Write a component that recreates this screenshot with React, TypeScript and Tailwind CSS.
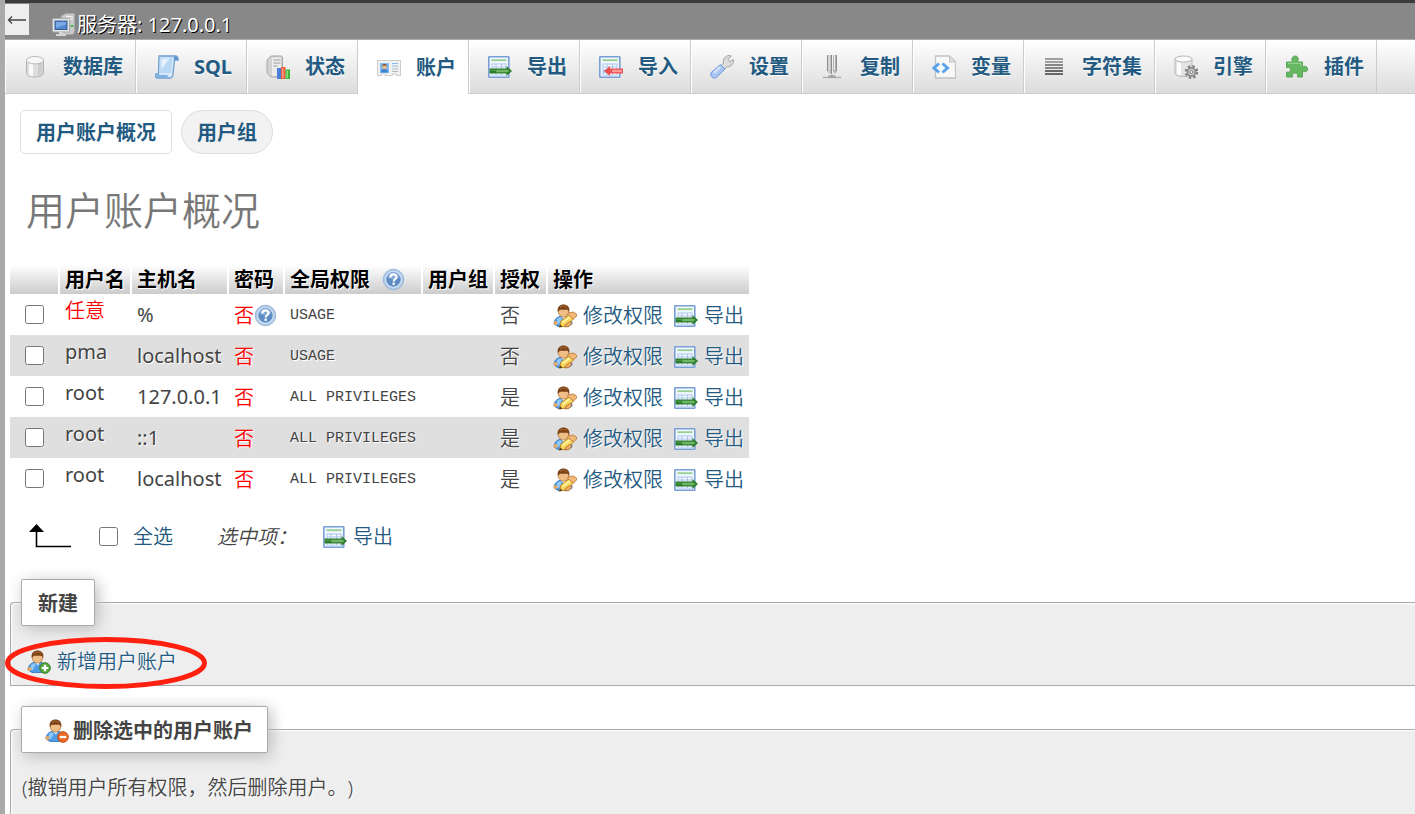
import React from 'react';

type IconProps = { className?: string };

const Svg = ({ className = 'h-6 w-6', children }: { className?: string; children: React.ReactNode }) => (
  <svg viewBox="0 0 24 24" className={`shrink-0 ${className}`} fill="none" aria-hidden="true">
    {children}
  </svg>
);

const ServerIcon = ({ className }: IconProps) => (
  <Svg className={className}>
    <path d="M9 3l5-2.500h8.500V19l-2 2.500H10z" fill="#c9c9c9" stroke="#a5a5a5" />
    <path d="M14 3.500h7M14 6h7" stroke="#f2f2f2" />
    <path d="M18.500 13h3" stroke="#39b54a" strokeWidth="1.800" />
    <rect x="0.500" y="5.500" width="17" height="13.500" rx="1" fill="#e6e6e6" stroke="#a3a9ae" />
    <rect x="3" y="8" width="12" height="8.500" fill="#4f86cf" stroke="#3c5f92" />
    <path d="M4 9h10v2.500L4 15z" fill="#79a9e4" />
    <path d="M7 19h4v2h3v2H4v-2h3z" fill="#d5d5d5" />
  </Svg>
);

const DatabaseIcon = () => (
  <Svg>
    <path d="M2.500 5v13c0 2.500 4 4 8.500 4s8.500-1.500 8.500-4V5z" fill="#dedede" stroke="#b3b3b3" />
    <path d="M5 7v13c1 .8 2 1.200 4 1.500V8z" fill="#fafafa" />
    <path d="M14 8v13.500c2-.3 3.500-.8 4.500-1.500V7z" fill="#cdcdcd" />
    <ellipse cx="11" cy="5.200" rx="8.500" ry="3.700" fill="#f8f8f8" stroke="#bababa" />
  </Svg>
);

const SqlIcon = () => (
  <Svg>
    <path d="M4 1h16c2.500 0 3.500 1.500 3 4h-3.500L18 19c-.2 2.500-1 4-3 4H2.500c-2 0-2.500-2-1.500-4h2.500z" fill="#d6e8fa" stroke="#6f9fd0" strokeWidth="1.300" />
    <path d="M5.500 2.500h12L16 18H5z" fill="#b9d8f6" />
    <path d="M6.500 3.500h8l-8 11z" fill="#e4f1fd" />
    <path d="M1.500 20h11c.2 2 .6 2.500 2 2.500H3c-1.500 0-2-1.500-1.500-2.500z" fill="#7fb0e3" />
    <path d="M18.500 1.700c2-.7 4.500 0 4.500 3.300h-3.500z" fill="#5f95cf" />
  </Svg>
);

const StatusIcon = () => (
  <Svg>
    <path d="M1 5l4-4h10.500l1 2v17l-3 2H5l-4-4z" fill="#d2d2d2" stroke="#a6a6a6" />
    <path d="M6 2.500h9V21H6z" fill="#ececec" />
    <path d="M7.500 5h7M7.500 8h7M7.500 11h4" stroke="#9b9b9b" />
    <path d="M11 13h4v11h-4z" fill="#4a80dc" />
    <path d="M15 12h4.500v12H15z" fill="#ee5b3a" />
    <path d="M19.500 14.500H24V24h-4.500z" fill="#3eb63f" />
    <path d="M16 13h1.500v10H16z" fill="#ff9b80" />
    <path d="M20.500 15.500H22V23h-1.500z" fill="#86dc81" />
  </Svg>
);

const AccountsIcon = () => (
  <Svg>
    <path d="M.5 4.500h23v15h-4v-1.500h-4v1.500h-7v-1.500h-4v1.500h-4z" fill="#f1f1f1" stroke="#cccccc" />
    <path d="M3 7h9v10H3z" fill="#7fbcf3" />
    <path d="M4 16.500c0-3 1.500-4 3.500-4s3.500 1 3.500 4z" fill="#3f83cf" />
    <circle cx="7.500" cy="11" r="2.300" fill="#e9b887" />
    <path d="M4.700 10.500c0-3.500 5.600-3.500 5.600 0L9 9.500H6z" fill="#7d451b" />
    <path d="M15 7.500h6M15 10h6" stroke="#8dbdea" strokeWidth="1.200" />
    <path d="M15 13h6M15 15.500h6" stroke="#b9b9b9" strokeWidth="1.200" />
  </Svg>
);

const Sheet = () => (
  <>
    <rect x="0.800" y="1.800" width="20" height="20.400" rx="0.500" fill="#f1f7ff" stroke="#7a9fd6" strokeWidth="1.600" />
    <path d="M3.500 5.200h15" stroke="#97cf90" strokeWidth="1.800" />
    <path d="M3.500 8.500h15v12h-15z" fill="#aac5ec" />
    <path d="M4.500 9.500h3v2h-3zM8.500 9.500h4.500v2H8.500zM14 9.500h3.500v2H14zM4.500 12.500h3v2h-3zM8.500 12.500h4.500v2H8.500zM14 12.500h3.500v2H14zM4.500 18h3v1.800h-3zM8.500 18h4.500v1.800H8.500zM14 18h3.500v1.800H14z" fill="#f6faff" />
  </>
);

const ExportIcon = ({ className }: IconProps) => (
  <Svg className={className}>
    <Sheet />
    <path d="M1.500 13.500h17v-2.500l5.500 5-5.500 5v-2.500h-17z" fill="#2c7d2b" />
    <path d="M8 14.800h11.500l2 1.200-2 1.200H8z" fill="#6fb766" />
    <path d="M2.500 14.800H9v1.200H2.500z" fill="#4a9b44" />
  </Svg>
);

const ImportIcon = () => (
  <Svg>
    <Sheet />
    <path d="M24 13.500H11v-2.500l-6 5 6 5v-2.500h13z" fill="#ee4f4f" />
    <path d="M23 14.800H13v2.400h10z" fill="#ff9c9c" />
  </Svg>
);

const WrenchIcon = () => (
  <Svg>
    <path d="M11 11l2.500-3c-.8-4 1.700-7.200 5.700-7.500l2 .5-3 3.500 1.500 2.300 3.500-2.300c1 4-2 7.500-6 7.200l-3.500 3z" fill="#dcdcdc" stroke="#a1a1a1" />
    <path d="M10.500 9.500l4.500 4.500-8.500 8.500c-3 2-7-1.500-5.500-4.800z" fill="#a9c4f1" stroke="#7198d8" />
    <path d="M10 12l-6 6" stroke="#d3e1fa" strokeWidth="2.500" />
  </Svg>
);

const ReplicationIcon = () => (
  <Svg>
    <path d="M6 0h4v18L8.500 19 6 16z" fill="#c4c4c4" />
    <path d="M12 0h4v16l-2 3-2-3z" fill="#b3b3b3" />
    <path d="M8 0v15M13.500 0v15" stroke="#e9e9e9" />
    <path d="M6.500 0v16M10.500 0v19M15.500 0v16" stroke="#8b8b8b" />
    <path d="M2 22.500h18" stroke="#b0b0b0" strokeWidth="1.500" />
    <path d="M7 21l4-1.500 4 1.500v2H7z" fill="#a5a5a5" />
  </Svg>
);

const VariablesIcon = () => (
  <Svg>
    <path d="M3.500 1h14l6 6v16h-20z" fill="#f8f8f8" stroke="#c2c2c2" strokeWidth="1.300" />
    <path d="M17.500 1v6h6z" fill="#e2e2e2" stroke="#c2c2c2" />
    <path d="M7 8.500L2 13l5 4.500M10.500 8.500l5 4.500-5 4.500" stroke="#5ba2e8" strokeWidth="3" />
  </Svg>
);

const CharsetIcon = () => (
  <Svg>
    <path d="M2 4h18M2 7h18" stroke="#858585" strokeWidth="1.400" />
    <path d="M2 10h18M2 13h18" stroke="#666" strokeWidth="1.400" />
    <path d="M2 16h18M2 19h18" stroke="#3d3d3d" strokeWidth="1.600" />
  </Svg>
);

const EngineIcon = () => (
  <Svg>
    <path d="M1 4v14c0 2 3.500 3.500 8.500 3.500S18 20 18 18V4z" fill="#e4e4e4" stroke="#b5b5b5" />
    <path d="M3 7v12c1 .8 2 1.200 4 1.500V8z" fill="#fbfbfb" />
    <ellipse cx="9.500" cy="4" rx="8.500" ry="3" fill="#fafafa" stroke="#bababa" />
    <circle cx="17.500" cy="17" r="5.700" stroke="#858585" strokeWidth="2.500" strokeDasharray="2.500 2" />
    <circle cx="17.500" cy="17" r="4" fill="#cfcfcf" stroke="#858585" strokeWidth="1.600" />
    <circle cx="17.500" cy="17" r="1.500" fill="#f5f5f5" stroke="#777" />
  </Svg>
);

const PluginIcon = () => (
  <Svg>
    <path d="M1.500 7h6c-1.500-3.500 0-6 2.700-6s4 2.500 2.300 6h5v5c3-1.500 5-.5 5 2s-2 3.500-5 2v6h-5c.8-3-.4-4-2.500-4s-3.300 1-2.500 4h-6v-5c3 .8 4-.6 4-2.300s-1-2.700-4-2z" fill="#67b862" stroke="#5aa556" />
    <path d="M3 8.300h13V11" stroke="#9ad894" />
  </Svg>
);

const HelpIcon = () => (
  <svg viewBox="0 0 24 24" className="inline-block h-[23px] w-[23px] shrink-0" fill="none" aria-hidden="true">
    <circle cx="12" cy="12" r="10.700" fill="#b3cbe8" stroke="#94b2d6" />
    <circle cx="12" cy="12" r="8.200" fill="#5d8cc4" stroke="#cfe0f3" strokeWidth="1.300" />
    <path d="M6 10a6 6 0 0 1 12 0c-3 2.500-9 2.500-12 0z" fill="#86abd8" />
    <path d="M8.800 9.800c0-4.200 6.400-4 6.400-.4 0 2.300-3 2.200-3 4.600" stroke="#fff" strokeWidth="2.200" />
    <rect x="11" y="15.200" width="2.400" height="2.400" fill="#fff" />
  </svg>
);

const Person = () => (
  <>
    <path d="M1 20c0-4.500 3-7.500 8-8h3c4.500.5 7 3 7 8l-4 2.500H5z" fill="#4e9be8" stroke="#2c6eb9" strokeWidth="0.800" />
    <path d="M4 15c2-2 4-2 5-1l-3 6H4z" fill="#91c8f8" />
    <path d="M8 12h5l-2 3.500z" fill="#fff" />
    <circle cx="2.500" cy="19" r="2" fill="#e9a75f" />
    <ellipse cx="10.500" cy="7.800" rx="5.200" ry="5.300" fill="#efbd86" stroke="#a96a31" strokeWidth="0.700" />
    <path d="M4.700 8C4 2.500 7 .5 10.500.5S17.200 2.500 16.300 8l-1.800-2.200H7z" fill="#7b4318" />
    <path d="M7 3.500c2-1.800 5-1.800 7 0" stroke="#a8672f" strokeWidth="1.200" />
  </>
);

const UserEditIcon = () => (
  <Svg>
    <Person />
    <path d="M8 17l8.500-6.500 4.500 4-8 7.500-6.500 1z" fill="#f6d65a" stroke="#c58f2a" />
    <path d="M9.500 18.500l8-6" stroke="#fff3a3" strokeWidth="1.800" />
    <path d="M14.500 10.500c1-2 2-2.500 3.500-1.500 1-1.500 3-1.500 3 0 2 0 3 1 2.500 3L20.500 15z" fill="#f3b776" stroke="#b56c28" strokeWidth="0.800" />
    <path d="M13 20l4-2.500 2 1.500-3 3.500-4 .5z" fill="#f0ae68" stroke="#b56c28" strokeWidth="0.800" />
    <path d="M6 23.500l1-3 2.500 2z" fill="#5c3a17" />
  </Svg>
);

const UserAddIcon = () => (
  <Svg>
    <Person />
    <circle cx="18" cy="18" r="5.300" fill="#5aab3e" stroke="#347b25" />
    <path d="M18 14.700v6.600M14.700 18h6.600" stroke="#fff" strokeWidth="2.200" />
  </Svg>
);

const UserRemoveIcon = () => (
  <Svg>
    <Person />
    <circle cx="18" cy="18" r="5.300" fill="#ec6b25" stroke="#c14a12" />
    <path d="M14.700 18h6.600" stroke="#fff" strokeWidth="2.200" />
  </Svg>
);

const tabs = [
  { label: '数据库', icon: <DatabaseIcon /> },
  { label: 'SQL', icon: <SqlIcon /> },
  { label: '状态', icon: <StatusIcon /> },
  { label: '账户', icon: <AccountsIcon />, active: true },
  { label: '导出', icon: <ExportIcon /> },
  { label: '导入', icon: <ImportIcon /> },
  { label: '设置', icon: <WrenchIcon /> },
  { label: '复制', icon: <ReplicationIcon /> },
  { label: '变量', icon: <VariablesIcon /> },
  { label: '字符集', icon: <CharsetIcon /> },
  { label: '引擎', icon: <EngineIcon /> },
  { label: '插件', icon: <PluginIcon /> },
];

const accounts = [
  { user: '任意', host: '%', privileges: 'USAGE', grant: '否', anonymous: true },
  { user: 'pma', host: 'localhost', privileges: 'USAGE', grant: '否' },
  { user: 'root', host: '127.0.0.1', privileges: 'ALL PRIVILEGES', grant: '是' },
  { user: 'root', host: '::1', privileges: 'ALL PRIVILEGES', grant: '是' },
  { user: 'root', host: 'localhost', privileges: 'ALL PRIVILEGES', grant: '是' },
];

const thClass =
  'h-[29px] border-r-2 border-white bg-gradient-to-b from-white to-[#cccccc] p-0 pl-[5px] text-left font-bold text-black last:border-r-0';
const legendClass =
  'ml-[10px] flex h-[47px] items-center rounded-[2px] border border-[#aaaaaa] bg-white pt-[2px] font-bold shadow-[3px_3px_15px_#bbbbbb]';
const fieldsetClass =
  'min-w-0 rounded-tl border border-r-0 border-[#aaaaaa] bg-[#eeeeee] shadow-[inset_1px_1px_2px_#ffffff] [text-shadow:1px_1px_2px_#ffffff]';

export default function App() {
  return (
    <div className="h-screen overflow-hidden border-l-[5px] border-[#aaaaaa] bg-white font-['Noto_Sans','Noto_Sans_CJK_SC',sans-serif] text-[20px] leading-[28px] text-[#444444]">
      <header className="flex h-10 items-start border-t-3 border-b border-t-[#3b3b3b] border-b-[#aaaaaa] bg-[#888888]">
        <button type="button" aria-label="收起" className="mt-px flex h-[31px] w-6 items-center justify-center bg-[#eeeeee]">
          <svg viewBox="0 0 20 12" className="h-3 w-5" fill="none" stroke="#444" strokeWidth="1.300" aria-hidden="true">
            <path d="M19 6H2M5 2.500L1.500 6 5 9.500" />
          </svg>
        </button>
        <a href="#server" className="ml-[23px] flex h-9 items-center gap-px pt-[7px] text-white [text-shadow:1px_1px_0_#000000]">
          <ServerIcon />
          服务器: 127.0.0.1
        </a>
      </header>

      <nav className="flex h-[54px] border-b border-[#cccccc] bg-gradient-to-b from-white to-[#dcdcdc]">
        {tabs.map((t) => (
          <a
            key={t.label}
            href={`#${t.label}`}
            className={`flex min-w-[111px] shrink-0 items-center gap-[15px] whitespace-nowrap border-x border-l-white border-r-[#cccccc] pt-px pr-3 pl-[18px] font-bold text-[#235a81] [text-shadow:0_1px_0_#ffffff] ${
              t.active ? 'mb-[-1px] bg-white' : ''
            }`}
          >
            {t.icon}
            {t.label}
          </a>
        ))}
      </nav>

      <main className="pl-[5px]">
        <div className="flex gap-[9px] pt-4 pl-[10px] font-bold text-[#235a81]">
          <a href="#overview" className="flex h-11 items-center rounded-[5px] border border-[#dddddd] bg-white px-[15px] pt-px">用户账户概况</a>
          <a href="#groups" className="flex h-11 items-center rounded-full border border-[#dddddd] bg-[#f2f2f2] px-[15px] pt-px">用户组</a>
        </div>

        <h2 className="mt-7 mb-[27px] pl-4 text-[39px] leading-[56px] font-[350] text-[#777777]">用户账户概况</h2>

        <table className="w-[739px] table-fixed border-separate border-spacing-0 [text-shadow:1px_1px_0_#ffffff]">
          <colgroup>
            <col className="w-[50px]" />
            <col className="w-[72px]" />
            <col className="w-[97px]" />
            <col className="w-[56px]" />
            <col className="w-[138px]" />
            <col className="w-[72px]" />
            <col className="w-[53px]" />
            <col className="w-[201px]" />
          </colgroup>
          <thead>
            <tr className="whitespace-nowrap">
              <th className={thClass} aria-label="选择" />
              <th className={thClass}>用户名</th>
              <th className={thClass}>主机名</th>
              <th className={thClass}>密码</th>
              <th className={thClass}>
                <span className="flex items-center gap-3">
                  全局权限
                  <HelpIcon />
                </span>
              </th>
              <th className={thClass}>用户组</th>
              <th className={thClass}>授权</th>
              <th className={thClass}>操作</th>
            </tr>
          </thead>
          <tbody>
            {accounts.map((a, i) => (
              <tr key={i} className="whitespace-nowrap font-[350] even:bg-[#dfdfdf]">
                <td className="h-[41px] p-0 pl-[15px]">
                  <input id={`account-${i}`} type="checkbox" className="block h-[19px] w-[19px]" />
                </td>
                <td className="p-0 pb-2 pl-[5px]">
                  <label htmlFor={`account-${i}`} className={a.anonymous ? 'text-[#ff0000]' : 'font-normal'}>{a.user}</label>
                </td>
                <td className="p-0 pl-[5px] font-normal">{a.host}</td>
                <td className="p-0 pt-[2px] pl-[5px] text-[#ff0000]">
                  <span className="flex items-center">
                    否
                    {a.anonymous && <HelpIcon />}
                  </span>
                </td>
                <td className="p-0 pt-[3px] pl-[5px] font-['Liberation_Mono',monospace] text-[15px]">{a.privileges}</td>
                <td className="p-0" />
                <td className="p-0 pt-[2px] pl-[5px]">{a.grant}</td>
                <td className="p-0 pt-[2px] pl-[5px] text-[#235a81]">
                  <span className="flex items-center gap-[11px]">
                    <a href="#edit" className="flex items-center gap-[6px]">
                      <UserEditIcon />
                      修改权限
                    </a>
                    <a href="#export" className="flex items-center gap-[6px]">
                      <ExportIcon />
                      导出
                    </a>
                  </span>
                </td>
              </tr>
            ))}
          </tbody>
        </table>

        <div className="mt-[23px] flex h-7 items-center pl-[18px] font-[350]">
          <svg viewBox="0 0 44 27" className="h-[27px] w-11 shrink-0" aria-hidden="true">
            <path d="M8.500 6v17.500H43" fill="none" stroke="#000" strokeWidth="1.600" />
            <path d="M1 9l7.500-8L16 9z" fill="#000" />
          </svg>
          <input id="check-all" type="checkbox" className="ml-[27px] h-[19px] w-[19px]" />
          <label htmlFor="check-all" className="ml-[15px] pt-[2px] text-[#235a81]">全选</label>
          <i className="ml-[44px] w-[106px] pt-[2px]">选中项：</i>
          <button type="button" className="flex items-center gap-[6px] pt-[2px] text-[#235a81]">
            <ExportIcon />
            导出
          </button>
        </div>

        <fieldset className={`mt-[29px] ${fieldsetClass}`}>
          <legend className={`${legendClass} px-4`}>新建</legend>
          <div className="px-4 pt-[22px] pb-[9px]">
            <a href="#add" className="relative inline-flex items-center gap-[6px] align-top font-[350] text-[#235a81]">
              <UserAddIcon />
              新增用户账户
              <svg viewBox="0 0 204 54" className="pointer-events-none absolute top-[-12px] left-[-23px] h-[54px] w-[204px] max-w-none" fill="none" aria-hidden="true">
                <ellipse cx="102" cy="27" rx="98.500" ry="23.500" stroke="#ff2010" strokeWidth="5" />
              </svg>
            </a>
          </div>
        </fieldset>

        <fieldset className={`mt-5 ${fieldsetClass}`}>
          <legend className={`${legendClass} gap-1 pr-[14px] pl-[23px]`}>
            <UserRemoveIcon />
            删除选中的用户账户
          </legend>
          <p className="px-[11px] pt-[21px] pb-10 font-[350] [text-spacing-trim:space-all]">(撤销用户所有权限，然后删除用户。)</p>
        </fieldset>
      </main>
    </div>
  );
}
